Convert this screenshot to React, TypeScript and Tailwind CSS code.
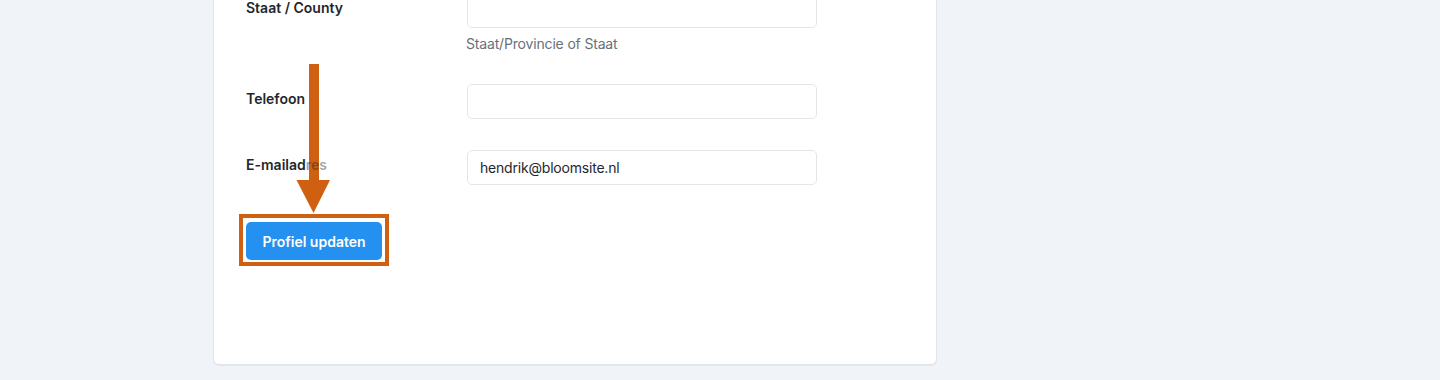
import React from "react";

function Row({
  label,
  value,
  help,
  className = "",
}: {
  label: React.ReactNode;
  value?: string;
  help?: string;
  className?: string;
}) {
  return (
    <div className={"flex " + className}>
      <div className="relative z-10 w-[221px] pt-[5px] text-[14px] leading-5 font-semibold text-[#1f272e]">
        {label}
      </div>
      <div className="flex flex-col">
        <div className="h-[35px] w-[350px] rounded-[5px] border border-[#e2e6ea] bg-white px-3 flex items-center text-[14px] tracking-[-0.2px] text-[#1f272e]">
          {value}
        </div>
        {help && (
          <div className="mt-[6px] -ml-px text-[14px] leading-5 tracking-[-0.17px] text-[#68717a]">
            {help}
          </div>
        )}
      </div>
    </div>
  );
}

export default function App() {
  return (
    <div
      className="relative h-[380px] w-[1440px] overflow-hidden bg-[#f0f3f8]"
      style={{ fontFamily: "Inter, 'Noto Sans', sans-serif" }}
    >
      <div className="ml-[213px] -mt-[20px] h-[385px] w-[724px] rounded-[6px] border border-[#e2e6ea] bg-white pl-[32px] pt-[12px] shadow-[0_1px_0_#e4e6ec]">
        <Row label="Staat / County" help="Staat/Provincie of Staat" />
        <Row label="Telefoon" className="mt-[30px]" />
        <Row
          label={
            <>
              E-mailad<span className="text-[#1f272e]/45">res</span>
            </>
          }
          value="hendrik@bloomsite.nl"
          className="mt-[31px]"
        />
        <button className="mt-[37px] flex h-[38px] w-[136px] items-center justify-center rounded-[5px] bg-[#2490ef] text-[14px] font-semibold text-white">
          Profiel updaten
        </button>
      </div>

      {/* annotation box */}
      <div className="absolute left-[239px] top-[214px] h-[52px] w-[150px] border-4 border-[#cf5f11]" />
      {/* annotation arrow */}
      <svg
        className="absolute left-[296px] top-[64px]"
        width="36"
        height="150"
        viewBox="0 0 36 150"
      >
        <rect x="13" y="0" width="10" height="117" fill="#cf5f11" />
        <polygon points="0.5,116 34,116 17.5,149" fill="#cf5f11" />
      </svg>
    </div>
  );
}
